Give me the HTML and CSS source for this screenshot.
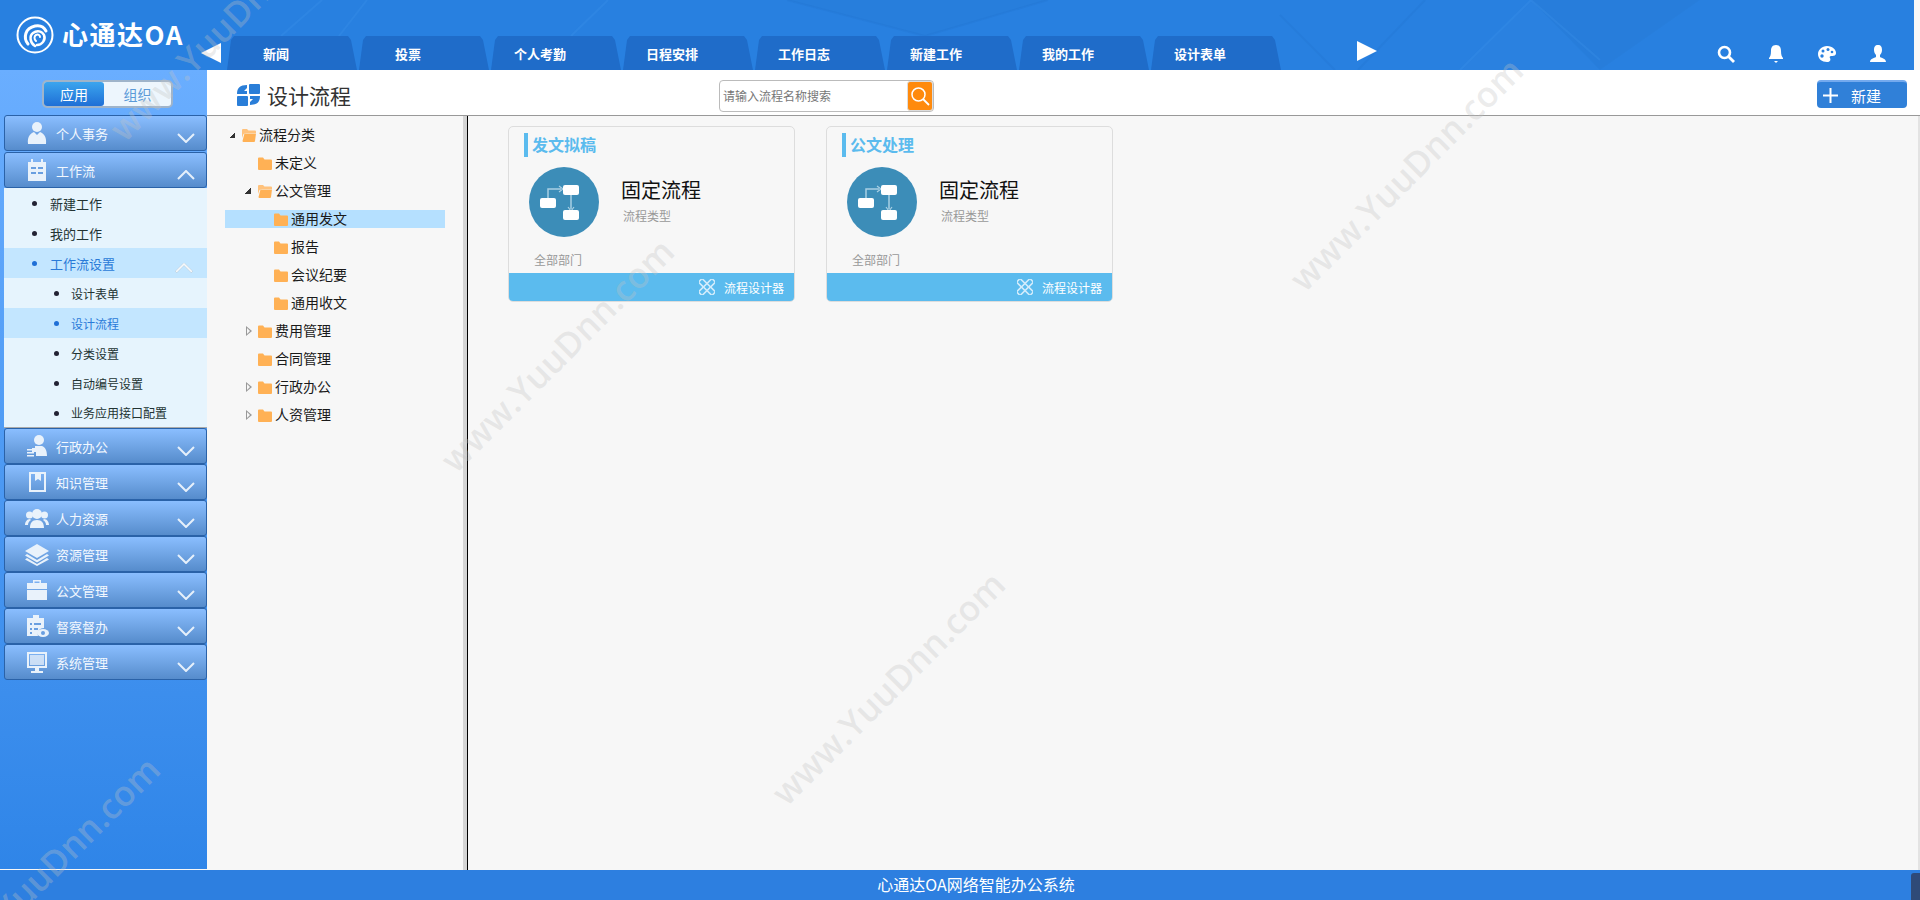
FILE: index.html
```html
<!DOCTYPE html>
<html lang="zh-CN">
<head>
    <meta charset="UTF-8">
    <title>心通达OA</title>
    <link rel="stylesheet" href="styles.css">
</head>
<body>
    <svg class="defs" width="0" height="0">
        <symbol id="folder" viewBox="0 0 14 14"><path d="M0 2.5q0-1 1-1h4l1.5 2H13q1 0 1 1V13q0 1-1 1H1q-1 0-1-1z" fill="#ffb155"/></symbol>
        <symbol id="folder-open" viewBox="0 0 14 14"><path d="M0 2q0-1 1-1h4l1.5 1.5H13q1 0 1 1V5H4L1.5 6 0 10z" fill="#ffc27c"/><path d="M2.5 5.5H14L13 13q0 1-1 1H1.5q-1 0-1-1z" fill="#ffb155"/></symbol>
        <symbol id="chev-down" viewBox="0 0 18 10"><path d="M1 1l8 8 8-8" fill="none" stroke="currentColor" stroke-width="2"/></symbol>
        <symbol id="chev-up" viewBox="0 0 18 10"><path d="M1 9l8-8 8 8" fill="none" stroke="currentColor" stroke-width="2"/></symbol>
        <symbol id="flow" viewBox="0 0 70 70">
            <circle cx="35" cy="35" r="35" fill="#3c8db8"/>
            <path d="M19 31V22H32M42 28V42" fill="none" stroke="#a9d0e4" stroke-width="1.5"/>
            <path d="M30 19l4 3-4 3M39 40l3 4 3-4" fill="none" stroke="#a9d0e4" stroke-width="1.2"/>
            <rect x="11" y="31" width="16" height="10" rx="2" fill="#fff"/>
            <rect x="34" y="18" width="16" height="10" rx="2" fill="#fff"/>
            <rect x="34" y="43" width="16" height="10" rx="2" fill="#fff"/>
        </symbol>
        <symbol id="tools" viewBox="0 0 16 16">
            <g fill="none" stroke="#d3ecfb" stroke-width="1.6">
                <rect x="-1.5" y="5.5" width="19" height="5" rx="1" transform="rotate(45 8 8)"/>
                <rect x="-1.5" y="5.5" width="19" height="5" rx="1" transform="rotate(-45 8 8)"/>
            </g>
        </symbol>
    </svg>

    <header class="topbar">
        <svg class="topbar-bg" width="1914" height="70" viewBox="0 0 1914 70">
            <path d="M787 0L925 36 1048 0z" fill="#000" opacity=".015"/>
            <path d="M1531 0L1460 70H1600z" fill="#fff" opacity=".01"/>
            <path d="M1531 0H1700L1600 70z" fill="#000" opacity=".02"/>
            <g fill="none" stroke-width="2">
                <path d="M787 0L925 36M1048 0L925 36M1280 15L1335 70M1425 0L1358 70" stroke="#1f6cc9" opacity=".2"/>
                <path d="M322 0L281 36M367 0L339 36M608 0L571 36M1531 0L1460 70M1531 0L1600 60" stroke="#3a8ee8" opacity=".35"/>
            </g>
        </svg>
        <div class="logo">
            <svg class="logo-mark" width="38" height="38" viewBox="0 0 38 38">
                <circle cx="19" cy="19" r="17.500" fill="none" stroke="#fff" stroke-width="2"/>
                <g fill="none" stroke="#fff" stroke-linecap="round">
                    <path d="M12 28C7 22 9 12 19 10c5-1 9 1 11 5" stroke-width="3"/>
                    <path d="M19 30c-5-3-6-10-2-13 4-3 9-2 11 2 2 5-2 10-7 10" stroke-width="2.500"/>
                    <path d="M20 25c-2-2-2-5 0-6 2-1 4 0 4 2" stroke-width="2"/>
                </g>
            </svg>
            <span class="logo-text">心通达OA</span>
        </div>
        <span class="arrow arrow-left"></span>
        <nav class="tabs">
            <a class="tab">新闻</a>
            <a class="tab">投票</a>
            <a class="tab">个人考勤</a>
            <a class="tab">日程安排</a>
            <a class="tab">工作日志</a>
            <a class="tab">新建工作</a>
            <a class="tab">我的工作</a>
            <a class="tab">设计表单</a>
        </nav>
        <span class="arrow arrow-right"></span>
        <div class="top-icons">
            <svg width="18" height="18" viewBox="0 0 18 18"><circle cx="7.500" cy="7.500" r="5.500" fill="none" stroke="#fff" stroke-width="2.600"/><path d="M11.500 11.500L17 17" stroke="#fff" stroke-width="2.800"/></svg>
            <svg width="18" height="20" viewBox="0 0 18 20"><path d="M9 1c4 0 5 3 5 6 0 4 1 6 2 7v1H2v-1c1-1 2-3 2-7 0-3 1-6 5-6z" fill="#fff"/><path d="M7 17h4l-2 2z" fill="#fff"/></svg>
            <svg width="20" height="18" viewBox="0 0 20 18"><path d="M10 1c6 0 9 4 9 7 0 3-3 3-5 3-1 0-2 1-1 2 1 2 0 4-3 4-5 0-9-3-9-8 0-4 4-8 9-8z" fill="#fff"/><g fill="#2880e0"><circle cx="6" cy="6" r="1.500"/><circle cx="11" cy="4.500" r="1.500"/><circle cx="15" cy="7" r="1.300"/><circle cx="5" cy="11" r="1.700"/></g></svg>
            <svg width="18" height="18" viewBox="0 0 18 18"><path d="M9 0c3 0 4 2 4 5 0 2-1 4-2 5v2c2 1 6 2 6 5H1c0-3 4-4 6-5v-2C6 9 5 7 5 5c0-3 1-5 4-5z" fill="#fff"/></svg>
        </div>
    </header>

    <div class="layout">
        <aside class="sidebar">
            <div class="switch">
                <span class="switch-item switch-active">应用</span>
                <span class="switch-item">组织</span>
            </div>
            <ul class="menu">
                <li class="menu-item">
                    <svg class="menu-icon" width="24" height="24" viewBox="0 0 24 24"><circle cx="12" cy="6" r="5"/><path d="M3 23c-1-8 3-11 6-12l3 3 3-3c3 1 7 4 6 12z"/></svg>
                    <span class="menu-text">个人事务</span>
                    <svg class="chev"><use href="#chev-down"/></svg>
                </li>
                <li class="menu-item menu-open">
                    <svg class="menu-icon" width="24" height="24" viewBox="0 0 24 24"><path d="M3 4h3V1h2v3h8V1h2v3h3v19H3z"/><path d="M6 10h5M13 10h5M6 15h5M13 15h5" stroke="#6a9fe0" stroke-width="2"/></svg>
                    <span class="menu-text">工作流</span>
                    <svg class="chev"><use href="#chev-up"/></svg>
                </li>
                <li class="sub-item">新建工作</li>
                <li class="sub-item">我的工作</li>
                <li class="sub-item sub-active">工作流设置<svg class="chev chev-sub"><use href="#chev-up"/></svg></li>
                <li class="sub-item sub-deep">设计表单</li>
                <li class="sub-item sub-deep sub-active">设计流程</li>
                <li class="sub-item sub-deep">分类设置</li>
                <li class="sub-item sub-deep">自动编号设置</li>
                <li class="sub-item sub-deep sub-last">业务应用接口配置</li>
                <li class="menu-item">
                    <svg class="menu-icon" width="24" height="24" viewBox="0 0 24 24"><circle cx="14" cy="6" r="5"/><path d="M10 12h7c3 1 5 4 5 10H11v-4H7v-4h3zM2 15h7v1.500H2zM2 18h7v1.500H2zM2 21h7v1.500H2z"/></svg>
                    <span class="menu-text">行政办公</span>
                    <svg class="chev"><use href="#chev-down"/></svg>
                </li>
                <li class="menu-item">
                    <svg class="menu-icon" width="24" height="24" viewBox="0 0 24 24"><path d="M4 2h17v20H4zM6 4v16h13V4h-3v7l-3-2-3 2V4z" fill-rule="evenodd"/></svg>
                    <span class="menu-text">知识管理</span>
                    <svg class="chev"><use href="#chev-down"/></svg>
                </li>
                <li class="menu-item">
                    <svg class="menu-icon" width="24" height="24" viewBox="0 0 24 24"><circle cx="12" cy="8" r="5"/><circle cx="4.500" cy="9" r="3.500"/><circle cx="19.500" cy="9" r="3.500"/><path d="M5 22c0-5 2-8 7-8s7 3 7 8zM0 19c0-3 2-6 5-6l1 1c-2 1-3 3-3 5zM24 19c0-3-2-6-5-6l-1 1c2 1 3 3 3 5z"/></svg>
                    <span class="menu-text">人力资源</span>
                    <svg class="chev"><use href="#chev-down"/></svg>
                </li>
                <li class="menu-item">
                    <svg class="menu-icon" width="24" height="24" viewBox="0 0 24 24"><path d="M12 2l12 7-12 7L0 9z"/><path d="M2 12l10 6 10-6 2 1.500-12 7-12-7zM2 16l10 6 10-6 2 1.500-12 6.500-12-6.500z"/></svg>
                    <span class="menu-text">资源管理</span>
                    <svg class="chev"><use href="#chev-down"/></svg>
                </li>
                <li class="menu-item">
                    <svg class="menu-icon" width="24" height="24" viewBox="0 0 24 24"><path d="M8 5V2h8v3h-1.500V3.500h-5V5zM2 5h20v6H2zM2 12h20v10H2z"/></svg>
                    <span class="menu-text">公文管理</span>
                    <svg class="chev"><use href="#chev-down"/></svg>
                </li>
                <li class="menu-item">
                    <svg class="menu-icon" width="24" height="24" viewBox="0 0 24 24"><path d="M2 4h6V1h6v3h5v10a6 6 0 0 0-6 8H2z"/><path d="M5 9h2v2H5zM9 9h7v2H9zM5 14h2v2H5zM5 18h2v2H5zM9 14h4v2H9z" fill="#6a9fe0"/><ellipse cx="18" cy="19" rx="6" ry="4"/><circle cx="18" cy="19" r="2" fill="#6a9fe0"/></svg>
                    <span class="menu-text">督察督办</span>
                    <svg class="chev"><use href="#chev-down"/></svg>
                </li>
                <li class="menu-item">
                    <svg class="menu-icon" width="24" height="24" viewBox="0 0 24 24"><path d="M2 2h20v16H14v3h4v2H6v-2h4v-3H2zM4 4v12h16V4z" fill-rule="evenodd"/><rect x="5" y="5" width="14" height="10" opacity=".75"/></svg>
                    <span class="menu-text">系统管理</span>
                    <svg class="chev"><use href="#chev-down"/></svg>
                </li>
            </ul>
        </aside>

        <main class="content">
            <div class="titlebar">
                <div class="title">
                    <svg width="23" height="22" viewBox="0 0 23 22" fill="#2a7ed8"><rect x="12" y="0" width="11" height="10" rx="1"/><rect x="0" y="12" width="11" height="10" rx="1"/><path d="M0 10C0 4 3 1 10 1v3L7 7h3v3z"/><path d="M23 12c0 6-3 9-10 9v-3l3-3h-3v-3z"/></svg>
                    <span class="title-text">设计流程</span>
                </div>
                <div class="search">
                    <span class="search-text">请输入流程名称搜索</span>
                    <span class="search-btn"><svg width="20" height="20" viewBox="0 0 20 20"><circle cx="8.500" cy="8.500" r="6.500" fill="none" stroke="#fff" stroke-width="1.500"/><path d="M13 13l6 6" stroke="#fff" stroke-width="1.800"/></svg></span>
                </div>
                <button class="btn-new"><svg width="15" height="15" viewBox="0 0 15 15"><path d="M7.500 0v15M0 7.500h15" stroke="#fff" stroke-width="2"/></svg><span>新建</span></button>
            </div>
            <div class="panes">
                <div class="tree">
                    <div class="tree-row"><i class="exp exp-open"></i><svg class="fold"><use href="#folder-open"/></svg>流程分类</div>
                    <div class="tree-row lv1"><i class="exp"></i><svg class="fold"><use href="#folder"/></svg>未定义</div>
                    <div class="tree-row lv1"><i class="exp exp-open"></i><svg class="fold"><use href="#folder-open"/></svg>公文管理</div>
                    <div class="tree-row lv2 tree-sel"><i class="exp"></i><svg class="fold"><use href="#folder"/></svg>通用发文</div>
                    <div class="tree-row lv2"><i class="exp"></i><svg class="fold"><use href="#folder"/></svg>报告</div>
                    <div class="tree-row lv2"><i class="exp"></i><svg class="fold"><use href="#folder"/></svg>会议纪要</div>
                    <div class="tree-row lv2"><i class="exp"></i><svg class="fold"><use href="#folder"/></svg>通用收文</div>
                    <div class="tree-row lv1"><i class="exp exp-closed"></i><svg class="fold"><use href="#folder"/></svg>费用管理</div>
                    <div class="tree-row lv1"><i class="exp"></i><svg class="fold"><use href="#folder"/></svg>合同管理</div>
                    <div class="tree-row lv1"><i class="exp exp-closed"></i><svg class="fold"><use href="#folder"/></svg>行政办公</div>
                    <div class="tree-row lv1"><i class="exp exp-closed"></i><svg class="fold"><use href="#folder"/></svg>人资管理</div>
                </div>
                <div class="cards">
                    <div class="card">
                        <div class="card-title">发文拟稿</div>
                        <div class="card-body">
                            <svg class="card-circle"><use href="#flow"/></svg>
                            <div>
                                <div class="card-type">固定流程</div>
                                <div class="card-label">流程类型</div>
                            </div>
                        </div>
                        <div class="card-dept">全部部门</div>
                        <div class="card-foot"><svg width="16" height="16"><use href="#tools"/></svg><span>流程设计器</span></div>
                    </div>
                    <div class="card">
                        <div class="card-title">公文处理</div>
                        <div class="card-body">
                            <svg class="card-circle"><use href="#flow"/></svg>
                            <div>
                                <div class="card-type">固定流程</div>
                                <div class="card-label">流程类型</div>
                            </div>
                        </div>
                        <div class="card-dept">全部部门</div>
                        <div class="card-foot"><svg width="16" height="16"><use href="#tools"/></svg><span>流程设计器</span></div>
                    </div>
                </div>
            </div>
        </main>
    </div>

    <footer class="footer">心通达OA网络智能办公系统<span class="footer-corner"></span></footer>

    <div class="wm-layer">
        <div class="wm wm-1">www.YuuDnn.com</div>
        <div class="wm wm-2">www.YuuDnn.com</div>
        <div class="wm wm-3">www.YuuDnn.com</div>
        <div class="wm wm-4">www.YuuDnn.com</div>
        <div class="wm wm-5">www.YuuDnn.com</div>
    </div>
</body>
</html>
```

FILE: styles.css
```css
* {
    box-sizing: border-box;
}

html {
    height: 900px;
    overflow: hidden;
}

body {
    margin: 0;
    height: 900px;
    overflow: hidden;
    position: relative;
    display: flex;
    flex-direction: column;
    background-color: #f7f7f7;
    font-family: "Noto Sans CJK SC", "Liberation Sans", sans-serif;
    color: #222;
}

.defs {
    position: absolute;
}

/* top bar */
.topbar {
    position: relative;
    height: 70px;
    flex: none;
    margin-right: 6px;
    display: flex;
    align-items: flex-end;
    background-color: #2880e0;
    overflow: hidden;
}

.topbar-bg {
    position: absolute;
    left: 0;
    top: 0;
}

.logo {
    position: relative;
    align-self: flex-start;
    width: 201px;
    padding: 16px 0 0 16px;
    display: flex;
    align-items: center;
    gap: 8px;
}

.logo-text {
    margin-top: -2px;
    color: #fff;
    font-size: 26px;
    font-weight: 700;
    line-height: 38px;
    letter-spacing: 1.5px;
    white-space: nowrap;
}

.arrow {
    position: relative;
    width: 0;
    height: 0;
    border-style: solid;
    align-self: flex-start;
}

.arrow-left {
    margin-top: 43px;
    border-width: 10px 20px 10px 0;
    border-color: transparent #fff transparent transparent;
}

.arrow-right {
    margin: 41px 0 0 76px;
    border-width: 10px 0 10px 20px;
    border-color: transparent transparent transparent #fff;
}

.tabs {
    position: relative;
    display: flex;
    gap: 2px;
    margin-left: 6px;
}

.tab {
    width: 130px;
    height: 34px;
    padding-right: 32px;
    display: flex;
    align-items: center;
    justify-content: center;
    background-color: #1f6cc9;
    color: #fff;
    font-size: 13px;
    font-weight: 700;
    clip-path: polygon(0 100%, 4px 4px, 7px 0, 121px 0, 124px 4px, 130px 100%);
}

.top-icons {
    position: relative;
    align-self: flex-start;
    margin: 44px 0 0 auto;
    padding-right: 27px;
    display: flex;
    align-items: center;
    gap: 32px;
}

/* main area */
.layout {
    flex: 1;
    display: flex;
    min-height: 0;
}

.sidebar {
    width: 207px;
    flex: none;
    margin-bottom: 1px;
    padding: 10px 0 0 4px;
    background: linear-gradient(#6aaeff, #2f85e8);
}

.switch {
    width: 131px;
    height: 28px;
    margin-left: 38px;
    display: flex;
    border: 2px solid #9fb4ca;
    border-radius: 5px;
    background-color: #edf6fd;
    font-size: 14px;
}

.switch-item {
    flex: 1;
    text-align: center;
    line-height: 24px;
    color: #5b9ad8;
}

.switch-active {
    flex: none;
    width: 60px;
    border-radius: 3px;
    background: linear-gradient(#3ba5ee, #1f6fd6);
    color: #fff;
}

.menu {
    list-style: none;
    margin: 7px 0 0;
    padding: 0;
}

.menu-item {
    height: 36px;
    padding-left: 20px;
    display: flex;
    align-items: center;
    border: 1px solid #2a62a8;
    border-radius: 3px;
    background: linear-gradient(#8abeff, #568ccc);
    color: #f2f8ff;
    font-size: 13px;
}

.menu-open {
    margin-top: 1px;
}

.menu-icon {
    width: 24px;
    height: 24px;
    flex: none;
    fill: #e9f2fb;
}

.menu-text {
    margin-left: 7px;
    margin-top: 1px;
}

.chev {
    width: 18px;
    height: 10px;
    margin: 9px 11px 0 auto;
    color: #e6f0fb;
}

.sub-item {
    position: relative;
    height: 30px;
    padding-left: 46px;
    display: flex;
    align-items: center;
    background-color: #e6f4fd;
    color: #233;
    font-size: 13px;
}

.sub-item::before {
    content: "";
    position: absolute;
    left: 28px;
    top: 13px;
    width: 5px;
    height: 5px;
    border-radius: 50%;
    background-color: #223;
}

.sub-deep {
    padding-left: 67px;
    font-size: 12px;
}

.sub-deep::before {
    left: 50px;
}

.sub-active {
    background-color: #c3e6ff;
    color: #2a7ad8;
}

.sub-active::before {
    background-color: #1f6fd6;
}

.sub-last {
    border-bottom: 1px solid #aaa;
}

.chev-sub {
    margin: 10px 14px 0 auto;
    color: #f4f9fd;
    filter: drop-shadow(0 0 0.5px #789);
}

.content {
    flex: 1;
    min-width: 0;
    display: flex;
    flex-direction: column;
}

.titlebar {
    height: 46px;
    flex: none;
    display: flex;
    background-color: #fff;
    border-bottom: 1px solid #999;
    padding: 10px 13px 0 0;
}

.title {
    width: 512px;
    height: 30px;
    padding-left: 30px;
    display: flex;
    align-items: center;
    gap: 7px;
}

.title-text {
    font-size: 21px;
    color: #333;
}

.search {
    width: 215px;
    height: 32px;
    display: flex;
    align-items: center;
    justify-content: space-between;
    border: 1px solid #bbb;
    border-radius: 4px;
    padding-left: 3px;
}

.search-text {
    padding-bottom: 2px;
    font-size: 12px;
    color: #777;
}

.search-btn {
    width: 26px;
    height: 30px;
    display: flex;
    align-items: center;
    justify-content: center;
    background-color: #ff8a0c;
    border: 1px solid #ddd;
    border-radius: 3px;
}

.btn-new {
    width: 90px;
    height: 28px;
    margin-left: auto;
    padding: 0 0 0 6px;
    display: flex;
    align-items: center;
    gap: 13px;
    border: 0;
    border-top: 2px solid #74aaee;
    border-radius: 4px;
    background-color: #3080d8;
    color: #fff;
    font: 15px "Noto Sans CJK SC", sans-serif;
}

.panes {
    flex: 1;
    display: flex;
    min-height: 0;
}

.tree {
    width: 261px;
    flex: none;
    padding: 10px 18px 0;
    border-right: 1px solid #000;
    box-shadow: inset -4px 0 0 #d4d4d4;
    font-size: 14px;
    color: #1a1a1a;
}

.tree-row {
    width: 220px;
    height: 18px;
    margin-bottom: 10px;
    padding: 0 0 2px 4px;
    display: flex;
    align-items: center;
    white-space: nowrap;
}

.lv1 {
    padding-left: 20px;
}

.lv2 {
    padding-left: 36px;
}

.tree-sel {
    background-color: #b5e0ff;
}

.exp {
    width: 13px;
    height: 8px;
    flex: none;
    margin-top: 2px;
}

.exp-open {
    background: linear-gradient(135deg, transparent 50%, #333 50%) 0 1px / 6px 6px no-repeat;
}

.exp-closed {
    position: relative;
}

.exp-closed::before {
    content: "";
    position: absolute;
    left: 1px;
    top: -1px;
    border-style: solid;
    border-width: 5px 0 5px 6px;
    border-color: transparent transparent transparent #999;
}

.exp-closed::after {
    content: "";
    position: absolute;
    left: 2px;
    top: 1px;
    border-style: solid;
    border-width: 3px 0 3px 3.5px;
    border-color: transparent transparent transparent #f7f7f7;
}

.fold {
    width: 14px;
    height: 14px;
    flex: none;
    margin: 2px 3px 0 0;
}

.cards {
    flex: 1;
    padding: 10px 0 0 40px;
    display: flex;
    align-items: flex-start;
    gap: 31px;
    border-right: 2px solid #e3e3e3;
}

.card {
    width: 287px;
    height: 176px;
    padding-top: 6px;
    border: 1px solid #ddd;
    border-radius: 5px;
    display: flex;
    flex-direction: column;
    overflow: hidden;
}

.card-title {
    height: 24px;
    margin-left: 15px;
    padding-left: 4px;
    border-left: 4px solid #5bbbee;
    color: #5bbbee;
    font-size: 16px;
    font-weight: 700;
    line-height: 22px;
}

.card-body {
    margin-top: 10px;
    padding-left: 20px;
    display: flex;
    gap: 22px;
}

.card-circle {
    width: 70px;
    height: 70px;
    flex: none;
}

.card-type {
    margin-top: 10px;
    font-size: 20px;
    line-height: 26px;
    color: #111;
}

.card-label {
    margin: 4px 0 0 2px;
    font-size: 12px;
    line-height: 18px;
    color: #999;
}

.card-dept {
    margin: 14px 0 0 25px;
    font-size: 12px;
    line-height: 18px;
    color: #999;
}

.card-foot {
    height: 28px;
    margin-top: auto;
    padding-right: 10px;
    display: flex;
    align-items: center;
    justify-content: flex-end;
    gap: 9px;
    background-color: #5bbbee;
    color: #fff;
    font-size: 12px;
}

.footer {
    position: relative;
    height: 30px;
    flex: none;
    padding-left: 32px;
    text-align: center;
    line-height: 29px;
    background-color: #2d7fe0;
    color: #fff;
    font-size: 16px;
}

.footer-corner {
    position: absolute;
    right: 0;
    bottom: 0;
    width: 9px;
    height: 27px;
    border-radius: 3px 0 0 0;
    background-color: #2f4a78;
}

/* watermarks lie over everything */
.wm-layer {
    position: absolute;
    left: 0;
    top: 0;
    width: 1920px;
    height: 900px;
    overflow: hidden;
    pointer-events: none;
}

.wm {
    position: absolute;
    transform: translate(-50%, -50%) rotate(-45deg);
    font-family: "Open Sans", sans-serif;
    font-size: 35px;
    font-weight: 600;
    line-height: 40px;
    white-space: nowrap;
    color: rgba(195, 195, 195, 0.33);
}

.wm-1 {
    left: 226px;
    top: 24px;
}

.wm-2 {
    left: 557px;
    top: 355px;
}

.wm-3 {
    left: 888px;
    top: 688px;
}

.wm-4 {
    left: 1406px;
    top: 174px;
}

.wm-5 {
    left: 43px;
    top: 873px;
}
```
